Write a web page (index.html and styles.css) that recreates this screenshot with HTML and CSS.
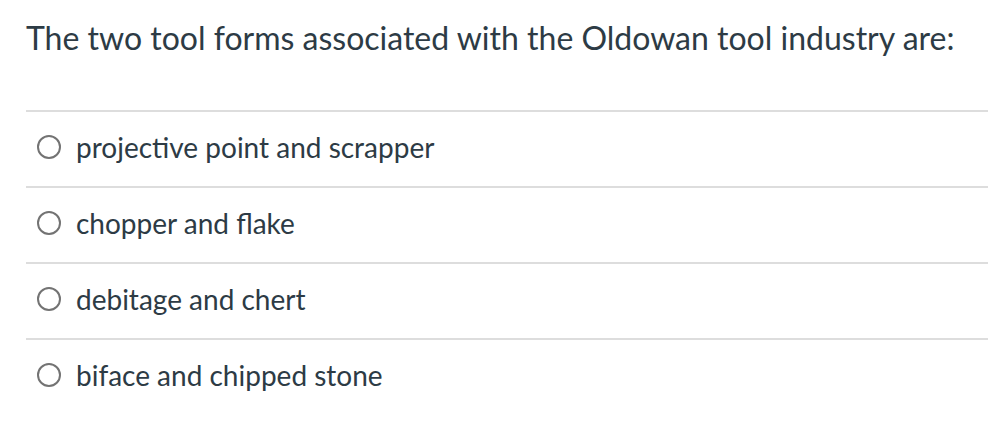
FILE: index.html
```html
<!DOCTYPE html>
<html>
<head>
<meta charset="utf-8">
<link rel="stylesheet" href="styles.css">
</head>
<body>
<div class="question">
  <p class="prompt">The two tool forms associated with the Oldowan tool industry are:</p>
  <div class="answers">
    <label class="answer"><span class="radio"></span><span class="text">projective point and scrapper</span></label>
    <label class="answer"><span class="radio"></span><span class="text">chopper and flake</span></label>
    <label class="answer"><span class="radio"></span><span class="text">debitage and chert</span></label>
    <label class="answer"><span class="radio"></span><span class="text">biface and chipped stone</span></label>
  </div>
</div>
</body>
</html>
```
FILE: styles.css
```css
html, body {
  margin: 0;
  padding: 0;
  background: #fff;
}
body {
  font-family: Lato, "Noto Sans", sans-serif;
  color: #2d3b45;
}
.question {
  padding: 16px 0 0 26px;
}
.prompt {
  margin: 0;
  font-size: 32px;
  line-height: 44px;
}
.answers {
  margin-top: 50px;
}
.answer {
  display: flex;
  align-items: center;
  height: 76px;
  padding-bottom: 5px;
  box-sizing: border-box;
  border-top: 2px solid #dddddd;
}
.radio {
  box-sizing: border-box;
  width: 24px;
  height: 24px;
  border: 2px solid #737373;
  border-radius: 50%;
  margin-left: 11px;
  margin-right: 15px;
  flex: none;
}
.text {
  font-size: 28px;
  line-height: 32px;
}
```
